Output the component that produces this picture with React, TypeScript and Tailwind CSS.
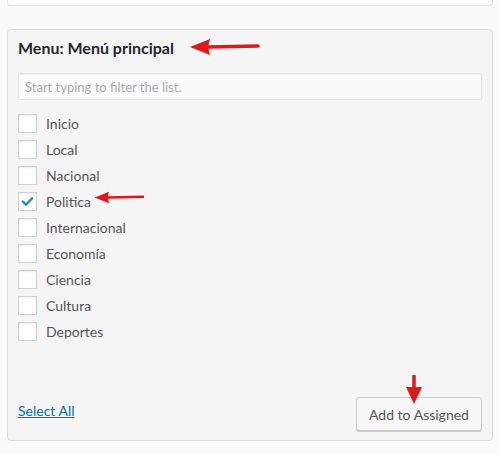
import React, { useState } from "react";

const items = [
  "Inicio",
  "Local",
  "Nacional",
  "Politica",
  "Internacional",
  "Economía",
  "Ciencia",
  "Cultura",
  "Deportes",
];

function LeftArrow({ className }: { className: string }) {
  return (
    <svg className={className} viewBox="0 0 70 18" fill="none">
      <path d="M18 9 L69 8" stroke="#e0171b" strokeWidth="3.5" strokeLinecap="round" />
      <path d="M1 9 L21 1 L19 9 L21 17 Z" fill="#e0171b" />
    </svg>
  );
}

export default function App() {
  const [checked, setChecked] = useState<string[]>(["Politica"]);

  const toggle = (name: string) => {
    setChecked((prev) =>
      prev.includes(name) ? prev.filter((n) => n !== name) : [...prev, name]
    );
  };

  return (
    <div className="min-h-[454px] bg-[#fafafa] px-[7px] font-['Lato','Liberation_Sans',sans-serif]">
      <div className="h-[6px] border-x border-b border-[#e2e2e2] rounded-b-[4px] bg-[#fdfdfd]" />

      <div className="relative mt-[23px] border border-[#dcdcdc] rounded-[4px] bg-[#f5f5f5] px-[10px] pt-[8px] pb-[9px]">
        <div className="flex items-center h-[20px]">
          <h3 className="text-[16px] font-bold text-[#23282d] leading-[20px]">
            Menu: Menú principal
          </h3>
        </div>
        <LeftArrow className="absolute left-[180px] top-[8px] w-[72px] h-[18px]" />

        <input
          type="text"
          placeholder="Start typing to filter the list."
          className="mt-[15px] block w-full h-[27px] border border-[#e3e3e3] rounded-[2px] bg-[#fbfbfb] px-[6px] text-[13px] text-[#555] placeholder:text-[#a7aaad] shadow-[inset_0_1px_1px_rgba(0,0,0,0.04)] outline-none"
        />

        <ul className="mt-[10px]">
          {items.map((name) => {
            const on = checked.includes(name);
            return (
              <li key={name} className="relative flex items-center h-[26px] gap-[9px]">
                <button
                  type="button"
                  onClick={() => toggle(name)}
                  className="flex items-center justify-center w-[19px] h-[19px] border border-[#cdd0d3] bg-white shadow-[inset_0_1px_2px_rgba(0,0,0,0.07)]"
                >
                  {on && (
                    <svg viewBox="0 0 16 16" className="w-[15px] h-[15px]">
                      <path
                        d="M3 8.2 L6.4 11.4 L13 4.4"
                        stroke="#1e8cbe"
                        strokeWidth="2.4"
                        fill="none"
                        strokeLinecap="round"
                        strokeLinejoin="round"
                      />
                    </svg>
                  )}
                </button>
                <span className="text-[14px] text-[#555]">{name}</span>
                {name === "Politica" && (
                  <LeftArrow className="absolute left-[76px] top-[2px] w-[50px] h-[15px]" />
                )}
              </li>
            );
          })}
        </ul>

        <div className="mt-[53px] flex items-center justify-between">
          <a href="#" className="pb-[8px] text-[14px] text-[#0073aa] underline">
            Select All
          </a>
          <div className="relative">
            <button
              type="button"
              className="w-[126px] h-[34px] border border-[#cccccc] rounded-[3px] bg-[#f7f7f7] text-[14px] text-[#555] shadow-[0_1px_0_#cccccc]"
            >
              Add to Assigned
            </button>
            <svg
              viewBox="0 0 18 30"
              className="absolute left-[49px] top-[-22px] w-[18px] h-[30px]"
            >
              <path d="M9 1 L9 14" stroke="#e0171b" strokeWidth="3.5" strokeLinecap="round" />
              <path d="M1 12 L17 12 L9 29 Z" fill="#e0171b" />
            </svg>
          </div>
        </div>
      </div>
    </div>
  );
}
